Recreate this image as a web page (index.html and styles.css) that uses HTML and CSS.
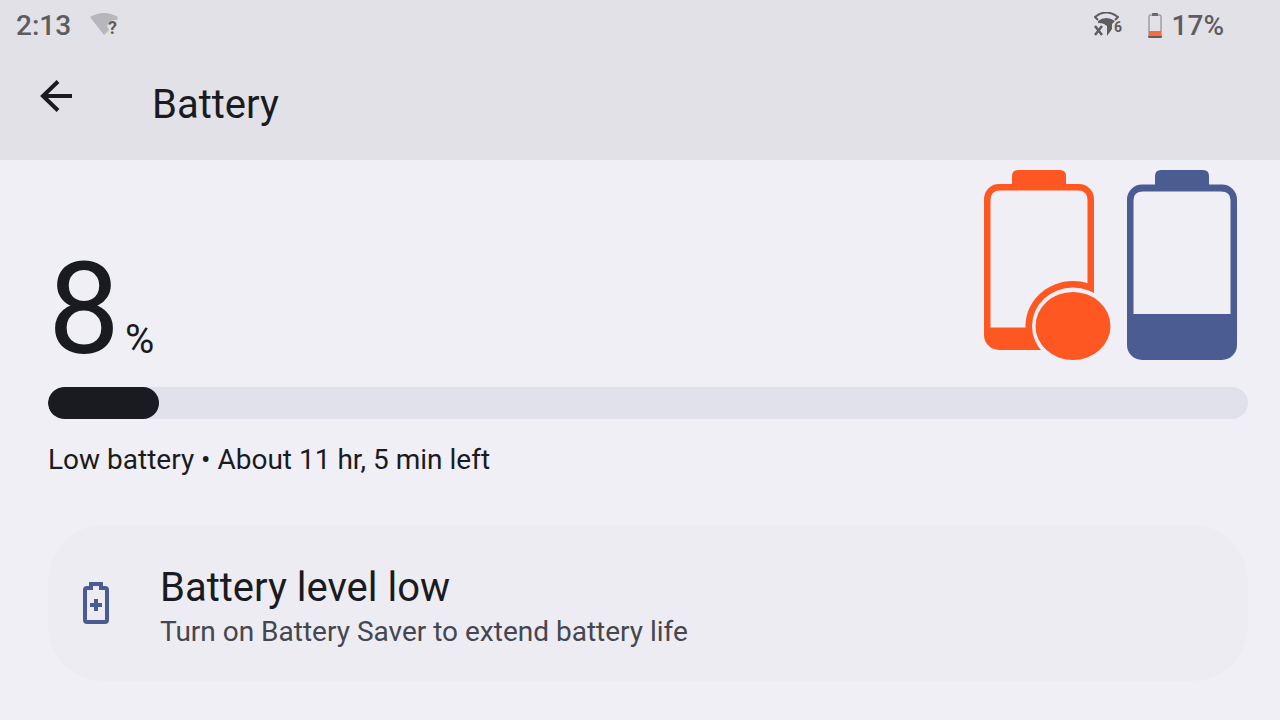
FILE: index.html
```html
<!DOCTYPE html>
<html lang="en">
<head>
  <meta charset="UTF-8">
  <meta name="viewport" content="width=device-width, initial-scale=1">
  <title>Battery</title>
  <link rel="stylesheet" href="styles.css">
</head>
<body>
  <header class="top">
    <div class="status">
      <div class="status-group">
        <span>2:13</span>
        <svg class="wifi" width="32" height="28" viewBox="0 0 32 28" aria-hidden="true">
          <path fill="#b7b6bb" d="M1 5Q15-3 29 5L28 8Q20 7 18 14L20 18L15 23Z"/>
          <text class="badge badge-query" x="19" y="22">?</text>
        </svg>
      </div>
      <div class="status-group status-right">
        <svg class="wifi6" width="32" height="28" viewBox="0 0 32 28" aria-hidden="true">
          <path fill="none" stroke="#5d5d5f" stroke-width="2" stroke-linejoin="round" d="M6 8L3 5Q14-4 26 5L23 8"/>
          <path fill="#5d5d5f" d="M6 9Q14 3 23 9L20 12V17L15 24V14L12 12Q10 11 6 11Z"/>
          <path stroke="#5d5d5f" stroke-width="2.500" d="M3 14L10 23M10 14L3 23"/>
          <text class="badge" x="22" y="20">6</text>
        </svg>
        <svg class="mini-battery" width="14" height="26" viewBox="0 0 14 26" aria-hidden="true">
          <path fill="#5d5d5f" d="M4 3V1Q4 0 5 0H9Q10 0 10 1V3Z"/>
          <rect x="1" y="2" width="12" height="22" rx="1" fill="none" stroke="#7d7d80"/>
          <rect x="1" y="18" width="12" height="5" fill="#fb6a3e"/>
          <path fill="#5d5d5f" d="M0 23H14V24Q14 25 12 25H2Q0 25 0 24Z"/>
        </svg>
        <span>17%</span>
      </div>
    </div>
    <div class="toolbar">
      <button class="back" type="button" aria-label="Back">
        <svg width="32" height="32" viewBox="0 0 32 32" fill="none" stroke="#1c1c1e" stroke-width="4">
          <path d="M32 16H3M18 1.500L3 16L18 30.500"/>
        </svg>
      </button>
      <h1>Battery</h1>
    </div>
  </header>

  <main>
    <section class="level">
      <div class="percent"><span class="number">8</span><span class="sign">%</span></div>
      <div class="batteries">
        <svg width="127" height="190" viewBox="0 0 127 190" aria-hidden="true">
          <defs>
            <clipPath id="shell"><rect y="14" width="110" height="166" rx="15"/></clipPath>
          </defs>
          <path fill="#ff5722" d="M28 16V6Q28 0 34 0H76Q82 0 82 6V16Z"/>
          <g clip-path="url(#shell)">
            <rect y="14" width="110" height="166" fill="#ff5722"/>
            <path fill="#f0eff6" d="M6.500 157.500V30Q6.500 20.500 16 20.500H94Q103.500 20.500 103.500 30V157.500Z"/>
            <ellipse cx="89" cy="156" rx="47.500" ry="45" fill="#ff5722"/>
            <ellipse cx="89" cy="156" rx="41" ry="38.500" fill="#f0eff6"/>
          </g>
          <ellipse cx="89" cy="156" rx="37.500" ry="34" fill="#ff5722"/>
        </svg>
        <svg width="110" height="190" viewBox="0 0 110 190" aria-hidden="true">
          <path fill="#4a5c92" d="M28 16V6Q28 0 34 0H76Q82 0 82 6V16Z"/>
          <rect y="14.500" width="110" height="175.500" rx="15" fill="#4a5c92"/>
          <path fill="#f0eff6" d="M6.500 144V30Q6.500 21.500 16 21.500H94Q103.500 21.500 103.500 30V144Z"/>
        </svg>
      </div>
    </section>

    <div class="bar" role="progressbar" aria-label="Battery level" aria-valuenow="8" aria-valuemin="0" aria-valuemax="100">
      <div class="bar-fill" style="width: 9.25%"></div>
    </div>
    <p class="summary">Low battery • About 11 hr, 5 min left</p>

    <button class="tip" type="button">
      <svg width="28" height="42" viewBox="0 0 28 42" aria-hidden="true">
        <path fill="none" stroke="#4a5c92" stroke-width="4" stroke-linejoin="round" d="M9 6H5Q3 6 3 8V38Q3 40 5 40H23Q25 40 25 38V8Q25 6 23 6H19"/>
        <path fill="#4a5c92" d="M7 0H21V8H17V4H11V8H7ZM12 17H16V21H20V25H16V29H12V25H8V21H12Z"/>
      </svg>
      <span class="tip-text">
        <span class="tip-title">Battery level low</span>
        <span class="tip-sub">Turn on Battery Saver to extend battery life</span>
      </span>
    </button>
  </main>
</body>
</html>
```

FILE: styles.css
```css
* { box-sizing: border-box; }
body { margin: 0; background: #f0eff6; color: #1a1b21; font-family: Roboto, sans-serif; }
button { border: 0; padding: 0; background: none; color: inherit; font: inherit; cursor: pointer; }
svg { display: block; flex: none; }

.top { background: #e2e1e8; height: 160px; }
.status { display: flex; justify-content: space-between; padding: 8px 56px 0 16px; color: #5d5d5f; font-size: 28px; line-height: 36px; font-weight: 500; }
.status-group { display: flex; align-items: center; gap: 18px; }
.status-right { gap: 10px; }
.mini-battery { margin-left: 14px; }
.badge { fill: #5d5d5f; font-size: 14px; font-weight: 700; }
.badge-query { font-size: 18px; }

.toolbar { display: flex; align-items: flex-start; gap: 80px; padding: 36px 40px 0; }
.toolbar h1 { margin: 0; font-size: 40px; line-height: 50px; font-weight: 400; }

main { padding: 10px 32px 32px 48px; }
.level { display: flex; justify-content: space-between; align-items: flex-end; padding-right: 11px; }
.percent { display: flex; align-items: baseline; gap: 5px; }
.number { font-size: 128px; line-height: 102px; }
.sign { font-size: 40px; line-height: 40px; }
.batteries { display: flex; gap: 16px; }

.bar { height: 32px; margin-top: 27px; border-radius: 16px; background: #e1e1eb; overflow: hidden; }
.bar-fill { height: 100%; border-radius: 16px; background: #1a1b21; }
.summary { margin: 24px 0 48px; font-size: 28px; line-height: 34px; }

.tip { display: flex; align-items: center; gap: 50px; width: 100%; min-height: 156px; padding: 28px 34px; border-radius: 56px; background: #edecf2; text-align: left; }
.tip-text { display: flex; flex-direction: column; padding-top: 6px; }
.tip-title { font-size: 40px; line-height: 52px; }
.tip-sub { color: #45464f; font-size: 28px; line-height: 36px; }
```
